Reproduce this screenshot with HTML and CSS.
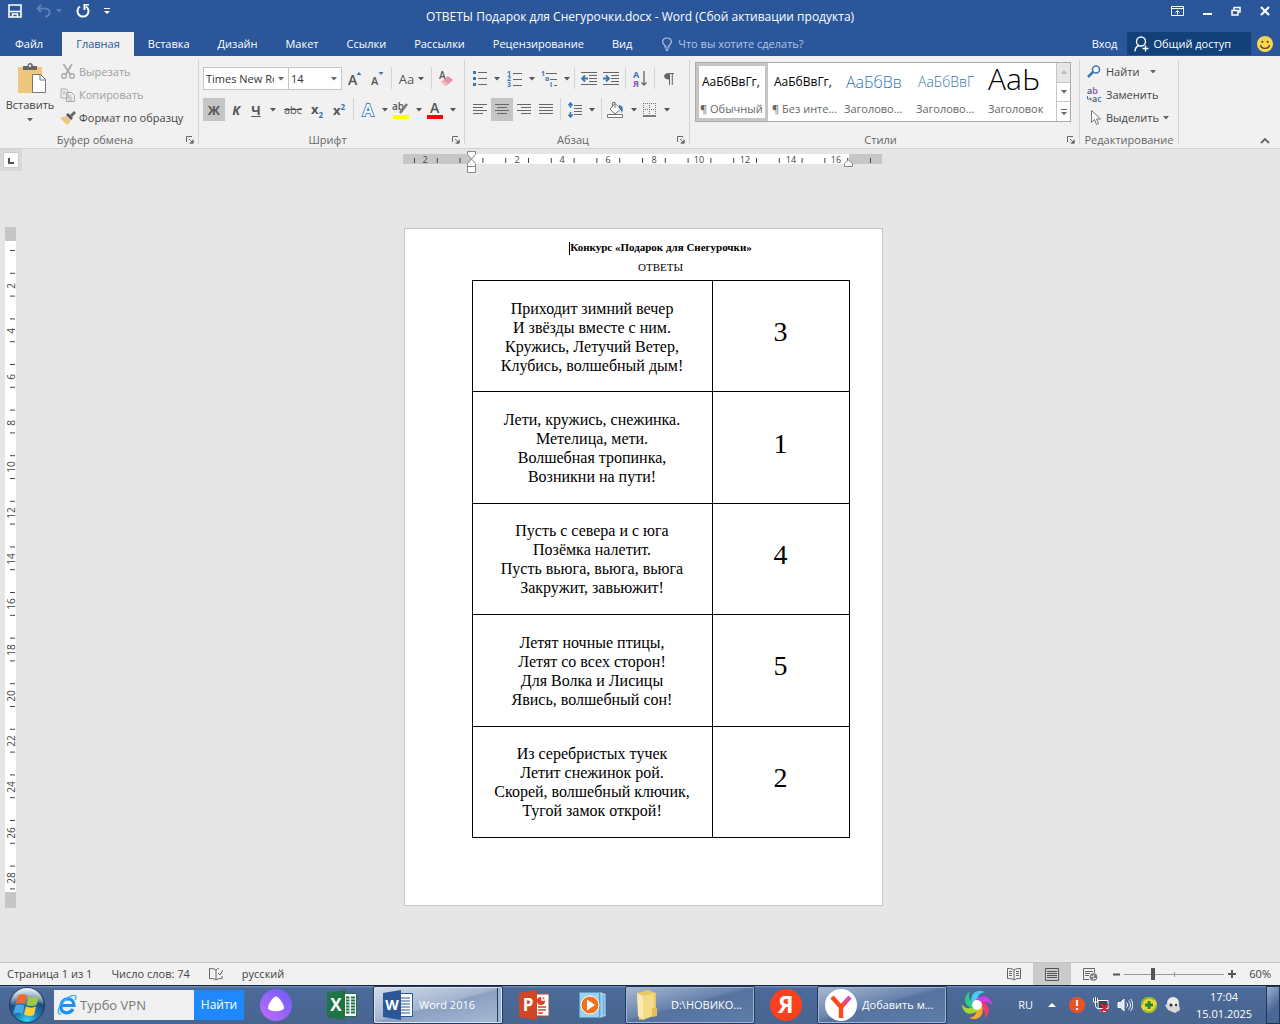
FILE: index.html
```
<!DOCTYPE html>
<html lang="ru">
<head>
  <meta charset="UTF-8">
  <title>ОТВЕТЫ Подарок для Снегурочки.docx - Word</title>
  <link rel="stylesheet" href="styles.css">
</head>
<body>
  <!-- shared icons -->
  <svg class="defs" aria-hidden="true">
    <symbol id="caret" viewBox="0 0 6 4"><path d="M0 0h6L3 3.5z" fill="currentColor"/></symbol>
    <symbol id="launcher" viewBox="0 0 8 8"><path d="M.5 6V.5H6M3 3l3 3M7 3.500V7H3.500" fill="none" stroke="#666"/><path d="M7.500 4v3.500H4z" fill="#666"/></symbol>
  </svg>

  <header class="titlebar">
    <div class="quick">
      <button aria-label="Сохранить"><svg width="14" height="14" viewBox="0 0 14 14"><path d="M1 1h12v12H1zM1 7.500h12M4.500 13v-3h5v3" fill="none" stroke="#fff" stroke-width="1.600"/></svg></button>
      <button class="dim" aria-label="Отменить"><svg width="15" height="14" viewBox="0 0 15 14"><path d="M5 1L1.500 4.500 5 8M2 4.500h7c6 0 6 8 0 8" fill="none" stroke="currentColor" stroke-width="2"/></svg><svg width="6" height="4"><use href="#caret"/></svg></button>
      <button aria-label="Повторить"><svg width="14" height="14" viewBox="0 0 14 14"><path d="M4 2.500a5.500 5.500 0 1 0 6 0" fill="none" stroke="#fff" stroke-width="2"/><path d="M7.500 0H13v1.500H9.500V6H7.500z" fill="#fff"/></svg></button>
      <button aria-label="Настройка панели"><svg width="6" height="6" viewBox="0 0 6 6"><path d="M0 0h6v1H0zM0 3h6L3 6z" fill="#fff"/></svg></button>
    </div>
    <h1 class="title">ОТВЕТЫ Подарок для Снегурочки.docx - Word (Сбой активации продукта)</h1>
    <div class="window-buttons">
      <button aria-label="Параметры ленты"><svg width="13" height="10" viewBox="0 0 13 10"><path d="M.5.5h12v9H.5zM.5 2.500h12M6.500 8.500V5M4.500 6.500l2-2 2 2" fill="none" stroke="#fff"/></svg></button>
      <button aria-label="Свернуть"><svg width="9" height="10"><path d="M0 7h9v2H0z" fill="#fff"/></svg></button>
      <button aria-label="Восстановить"><svg width="10" height="10" viewBox="0 0 10 10"><path d="M1 4.500h6V9H1zM3 4V1.500h6V6H7" fill="none" stroke="#fff" stroke-width="1.500"/></svg></button>
      <button aria-label="Закрыть"><svg width="10" height="10" viewBox="0 0 10 10"><path d="M1 1l8 8M9 1L1 9" stroke="#fff" stroke-width="2.200"/></svg></button>
    </div>
  </header>

  <nav class="tabs">
    <a class="file" href="#">Файл</a>
    <a class="active" href="#">Главная</a>
    <a href="#">Вставка</a>
    <a href="#">Дизайн</a>
    <a href="#">Макет</a>
    <a href="#">Ссылки</a>
    <a href="#">Рассылки</a>
    <a href="#">Рецензирование</a>
    <a href="#">Вид</a>
    <a class="tell" href="#"><svg width="10" height="14" viewBox="0 0 10 14"><path d="M3 10V8.500C-1 5.500.5 1 5 1s6 4.500 2 7.500V10zM3 12h4M4 13.500h2" fill="none" stroke="currentColor" stroke-width="1.200"/></svg>Что вы хотите сделать?</a>
    <div class="account">
      <a href="#">Вход</a>
      <button class="share"><svg width="15" height="16" viewBox="0 0 15 16"><circle cx="7" cy="5.500" r="4.500" fill="none" stroke="#fff" stroke-width="1.400"/><path d="M1 15.500c0-3 1.500-5 4-6M8.500 12.500h6M11.500 9.500v6" fill="none" stroke="#fff" stroke-width="1.400"/></svg>Общий доступ</button>
      <button class="smile" aria-label="Отзыв"><svg width="16" height="16" viewBox="0 0 16 16"><circle cx="8" cy="8" r="8" fill="#fcd54c"/><circle cx="5.300" cy="5.800" r="1.100" fill="#444"/><circle cx="10.700" cy="5.800" r="1.100" fill="#444"/><path d="M3.500 9c1 4.500 8 4.500 9 0" fill="none" stroke="#444" stroke-width="1.200"/></svg></button>
    </div>
  </nav>

  <section class="ribbon">
    <div class="group clipboard">
      <div class="group-body">
        <button class="paste">
          <svg width="30" height="32" viewBox="0 0 30 32"><path d="M1 4h24v26H1z" fill="#eec67d"/><path d="M6 7V3h4.500C10.500-1 16-1 16 3h4v4z" fill="#666"/><circle cx="13" cy="2.800" r="1.200" fill="#f1f1f1"/><path d="M15.500 11.500h8l5 5v13h-13z" fill="#fff" stroke="#777"/><path d="M23 11.500V17h5.500" fill="none" stroke="#777"/></svg>
          Вставить
          <svg class="caret" width="6" height="4"><use href="#caret"/></svg>
        </button>
        <div class="stack">
          <button class="off"><svg width="16" height="15" viewBox="0 0 16 15"><path d="M3.500 0l6.500 10M12 0L6 10" stroke="#aaa" stroke-width="1.800"/><circle cx="4" cy="12" r="2.300" fill="none" stroke="#aaa" stroke-width="1.400"/><circle cx="12" cy="12" r="2.300" fill="none" stroke="#aaa" stroke-width="1.400"/></svg>Вырезать</button>
          <button class="off"><svg width="16" height="14" viewBox="0 0 16 14"><path d="M1 1h5l2 2v7H1zM6.500 4.500h5l3 3v6h-8z" fill="#f1f1f1" stroke="#aaa"/><path d="M2.500 4h3M2.500 6h3M8.500 8h3M8.500 10h4M8.500 12h4" stroke="#aaa"/></svg>Копировать</button>
          <button><svg width="16" height="14" viewBox="0 0 16 14"><path d="M0 7l6-2 5 5-4 4z" fill="#eec67d"/><path d="M6 4l2-2 5 5-2 2z" fill="#555"/><path d="M10 4l4-4 2 2-4 4z" fill="#666"/></svg>Формат по образцу</button>
        </div>
      </div>
      <div class="caption"><span>Буфер обмена</span><button aria-label="Буфер обмена: параметры"><svg width="8" height="8"><use href="#launcher"/></svg></button></div>
    </div>

    <div class="group font">
      <div class="group-body rows">
        <div class="row">
          <span class="combo name"><select aria-label="Шрифт"><option>Times New Roman</option></select><svg width="6" height="4"><use href="#caret"/></svg></span>
          <span class="combo size"><select aria-label="Размер шрифта"><option>14</option></select><svg width="6" height="4"><use href="#caret"/></svg></span>
          <button class="tool" aria-label="Увеличить размер"><svg width="14" height="16" viewBox="0 0 14 16"><text class="glyph" x="0" y="14" font-size="14">A</text><path d="M8.500 4L11 1l2.500 3z" fill="#3b76b5"/></svg></button>
          <button class="tool" aria-label="Уменьшить размер"><svg width="14" height="16" viewBox="0 0 14 16"><text class="glyph" x="1" y="14" font-size="11">A</text><path d="M8.500 1h5L11 4z" fill="#3b76b5"/></svg></button>
          <i class="sep"></i>
          <button class="tool wide case">Aa<svg width="6" height="4"><use href="#caret"/></svg></button>
          <i class="sep"></i>
          <button class="tool" aria-label="Очистить формат"><svg width="16" height="16" viewBox="0 0 16 16"><text class="glyph" x="1" y="8" font-size="10">A</text><path d="M3 11l7-6 5 4-7 6z" fill="#e8919f"/><path d="M3 11l2.500-2 5 4-2.500 2z" fill="#f4b8c1"/></svg></button>
        </div>
        <div class="row">
          <button class="tool on"><b>Ж</b></button>
          <button class="tool"><b><i>К</i></b></button>
          <button class="tool wide under"><b><u>Ч</u></b><svg width="6" height="4"><use href="#caret"/></svg></button>
          <button class="tool strike"><s>abc</s></button>
          <button class="tool"><b>x<sub>2</sub></b></button>
          <button class="tool"><b>x<sup>2</sup></b></button>
          <i class="sep"></i>
          <button class="tool wide" aria-label="Текстовые эффекты"><svg width="16" height="16" viewBox="0 0 16 16"><text class="outline" x="8" y="14" font-size="16">A</text></svg><svg width="6" height="4"><use href="#caret"/></svg></button>
          <button class="tool wide mark" aria-label="Цвет выделения"><svg width="18" height="18" viewBox="0 0 18 18"><text class="glyph" x="0" y="9" font-size="10">ab</text><path d="M8 12l7-9" stroke="#777" stroke-width="2.500"/><path d="M1 14h16v4H1z" fill="#ff0"/></svg><svg width="6" height="4"><use href="#caret"/></svg></button>
          <button class="tool wide mark" aria-label="Цвет текста"><svg width="18" height="18" viewBox="0 0 18 18"><text class="glyph" x="4" y="12" font-size="14">A</text><path d="M1 14h16v4H1z" fill="red"/></svg><svg width="6" height="4"><use href="#caret"/></svg></button>
        </div>
      </div>
      <div class="caption"><span>Шрифт</span><button aria-label="Шрифт: параметры"><svg width="8" height="8"><use href="#launcher"/></svg></button></div>
    </div>

    <div class="group paragraph">
      <div class="group-body rows">
        <div class="row">
          <button class="tool list" aria-label="Маркеры"><svg width="14" height="15" viewBox="0 0 14 15"><path d="M5 1.500h9M5 7.500h9M5 13.500h9" stroke="#666"/><path d="M0 0h3v3H0zM0 6h3v3H0zM0 12h3v3H0z" fill="#3b76b5"/></svg><svg width="6" height="4"><use href="#caret"/></svg></button>
          <button class="tool list" aria-label="Нумерация"><svg width="15" height="16" viewBox="0 0 15 16"><path d="M6 2.500h9M6 8.500h9M6 14.500h9" stroke="#666"/><g class="tiny"><text x="0" y="5">1</text><text x="0" y="10">2</text><text x="0" y="16">3</text></g></svg><svg width="6" height="4"><use href="#caret"/></svg></button>
          <button class="tool list" aria-label="Многоуровневый список"><svg width="16" height="16" viewBox="0 0 16 16"><path d="M5 2.500h11M9 8.500h7M13 14.500h3" stroke="#666"/><g class="tiny"><text x="0" y="5">1</text><text x="4" y="10">a</text><text x="9" y="16">i</text></g></svg><svg width="6" height="4"><use href="#caret"/></svg></button>
          <i class="sep"></i>
          <button class="tool" aria-label="Уменьшить отступ"><svg width="16" height="14" viewBox="0 0 16 14"><path d="M0 .5h16M8 3.500h8M8 6.500h8M8 9.500h8M0 12.500h16" stroke="#666"/><path d="M7 6.500H1M4 3.500l-3 3 3 3" fill="none" stroke="#3b76b5" stroke-width="1.800"/></svg></button>
          <button class="tool" aria-label="Увеличить отступ"><svg width="16" height="14" viewBox="0 0 16 14"><path d="M0 .5h16M8 3.500h8M8 6.500h8M8 9.500h8M0 12.500h16" stroke="#666"/><path d="M0 6.500h6M3 3.500l3 3-3 3" fill="none" stroke="#3b76b5" stroke-width="1.800"/></svg></button>
          <i class="sep"></i>
          <button class="tool" aria-label="Сортировка"><svg width="14" height="16" viewBox="0 0 14 16"><g class="tiny sort"><text x="0" y="7">A</text><text class="ya-letter" x="0" y="16">Я</text></g><path d="M11 0v14M8.500 11.500L11 14l2.500-2.500" fill="none" stroke="#666" stroke-width="1.300"/></svg></button>
          <i class="sep"></i>
          <button class="tool" aria-label="Показать все знаки"><svg width="10" height="12" viewBox="0 0 10 12"><path d="M5 0h5v1H8.800v11h-1V1H6v11H5V6.500C-1.500 6.500-1.500 0 5 0z" fill="#666"/></svg></button>
        </div>
        <div class="row">
          <button class="tool" aria-label="По левому краю"><svg width="14" height="12"><path d="M0 .5h14M0 3.500h10M0 6.500h14M0 9.500h10" stroke="#666"/></svg></button>
          <button class="tool on" aria-label="По центру"><svg width="14" height="12"><path d="M0 .5h14M2 3.500h10M0 6.500h14M2 9.500h10" stroke="#666"/></svg></button>
          <button class="tool" aria-label="По правому краю"><svg width="14" height="12"><path d="M0 .5h14M4 3.500h10M0 6.500h14M4 9.500h10" stroke="#666"/></svg></button>
          <button class="tool" aria-label="По ширине"><svg width="14" height="12"><path d="M0 .5h14M0 3.500h14M0 6.500h14M0 9.500h14" stroke="#666"/></svg></button>
          <i class="sep"></i>
          <button class="tool spacing" aria-label="Интервал"><svg width="14" height="16" viewBox="0 0 14 16"><path d="M6 3.500h8M6 6.500h8M6 9.500h8M6 12.500h8" stroke="#666"/><path d="M2.500 1v5M2.500 10v5M.5 3.500l2-2.500 2 2.500M.5 12.500l2 2.500 2-2.500" fill="none" stroke="#3b76b5" stroke-width="1.600"/></svg><svg width="6" height="4"><use href="#caret"/></svg></button>
          <i class="sep"></i>
          <button class="tool spacing" aria-label="Заливка"><svg width="17" height="16" viewBox="0 0 17 16"><path d="M8 1.500L14 7l-6 5-5-5z" fill="#fff" stroke="#777"/><path d="M5.500 5V.5H8V6" fill="none" stroke="#777"/><path d="M12 3c5 1 4 5 3 8-1-2-1-4-3-5z" fill="#3b76b5"/><path d="M.5 12.500h15v3H.5z" fill="#fff" stroke="#777"/></svg><svg width="6" height="4"><use href="#caret"/></svg></button>
          <button class="tool spacing" aria-label="Границы"><svg width="14" height="14" viewBox="0 0 14 14"><path d="M0 .5h13M0 6.500h13M.5 0v12M6.500 0v12M12.500 0v12" fill="none" stroke="#777" stroke-dasharray="1 1"/><path d="M0 13h13" stroke="#555" stroke-width="1.500"/></svg><svg width="6" height="4"><use href="#caret"/></svg></button>
        </div>
      </div>
      <div class="caption"><span>Абзац</span><button aria-label="Абзац: параметры"><svg width="8" height="8"><use href="#launcher"/></svg></button></div>
    </div>

    <div class="group styles">
      <div class="group-body">
        <div class="gallery">
          <button class="style chosen"><span class="sample">АаБбВвГг,</span><span>¶ Обычный</span></button>
          <button class="style"><span class="sample">АаБбВвГг,</span><span>¶ Без инте...</span></button>
          <button class="style"><span class="sample head1">АаБбВв</span><span>Заголово...</span></button>
          <button class="style"><span class="sample head2">АаБбВвГ</span><span>Заголово...</span></button>
          <button class="style"><span class="sample head0">АаЬ</span><span>Заголовок</span></button>
          <div class="scroll">
            <button class="up" aria-label="Вверх"><svg width="6" height="4"><path d="M0 4h6L3 0z" fill="#bbb"/></svg></button>
            <button aria-label="Вниз"><svg width="6" height="4"><use href="#caret"/></svg></button>
            <button aria-label="Все стили"><svg width="6" height="6" viewBox="0 0 6 6"><path d="M0 0h6v1H0zM0 3h6L3 6z" fill="#666"/></svg></button>
          </div>
        </div>
      </div>
      <div class="caption"><span>Стили</span><button aria-label="Стили: параметры"><svg width="8" height="8"><use href="#launcher"/></svg></button></div>
    </div>

    <div class="group editing">
      <div class="group-body">
        <div class="stack">
          <button><svg width="14" height="13" viewBox="0 0 14 13"><circle cx="9" cy="4.500" r="3.500" fill="#fff" stroke="#3b76b5" stroke-width="1.600"/><path d="M6 7l-5 5" stroke="#3b76b5" stroke-width="2.500"/></svg>Найти<svg class="caret far" width="6" height="4"><use href="#caret"/></svg></button>
          <button><svg class="replace" width="16" height="16" viewBox="0 0 16 16" aria-hidden="true"><text x="0" y="7">a<tspan fill="#8a55b0">b</tspan></text><text x="5" y="15">a<tspan fill="#3b76b5">c</tspan></text><path d="M.500 9v3h4M3 10.500l1.500 1.500L3 13.500" fill="none" stroke="#3b76b5"/></svg>Заменить</button>
          <button><svg width="14" height="15" viewBox="0 0 14 15"><path d="M4.500.5v12l3-3 2 5 2-1-2-4.500h4z" fill="#fff" stroke="#777"/></svg>Выделить<svg class="caret" width="6" height="4"><use href="#caret"/></svg></button>
        </div>
      </div>
      <div class="caption"><span>Редактирование</span></div>
    </div>
    <button class="collapse" aria-label="Свернуть ленту"><svg width="10" height="6"><path d="M1 5l4-4 4 4" fill="none" stroke="#666" stroke-width="1.800"/></svg></button>
  </section>

  <main class="workspace">
    <button class="tab-stop" aria-label="Табуляция"><svg width="16" height="16"><path d="M.5.500h15v15H.5z" fill="#fff" stroke="#ccc"/><path d="M6 6v5h5" fill="none" stroke="#555" stroke-width="2"/></svg></button>
    <svg class="ruler-h" width="480" height="25" viewBox="0 0 480 25">
      <defs><pattern id="ticks-h" x="11" width="22.800" height="25" patternUnits="userSpaceOnUse"><path d="M.5 9v5" stroke="#444"/></pattern></defs>
      <path d="M0 5h479v10H0z" fill="#c6c6c6"/>
      <path d="M69 5h377v10H69z" fill="#fff"/>
      <path d="M0 5h479v10H0z" fill="url(#ticks-h)"/>
      <g class="marks">
        <text x="22" y="14">2</text><text x="114" y="14">2</text><text x="159" y="14">4</text><text x="205" y="14">6</text><text x="251" y="14">8</text><text x="296" y="14">10</text><text x="342" y="14">12</text><text x="388" y="14">14</text><text x="433" y="14">16</text>
      </g>
      <path d="M64.500 2.500h8v3l-4 4.500 4 4.500v3h-8v-3l4-4.500-4-4.500zM64.500 17.500h8v6h-8zM441.500 17.500v-3l4-3.500 4 3.500v3z" fill="#fff" stroke="#888"/>
    </svg>
    <svg class="ruler-v" width="12" height="682" viewBox="0 0 12 682">
      <defs><pattern id="ticks-v" y="23" width="12" height="22.800" patternUnits="userSpaceOnUse"><path d="M5 .5h5" stroke="#444"/></pattern></defs>
      <path d="M0 0h11v681H0z" fill="#c6c6c6"/>
      <path d="M0 14h11v651H0z" fill="#fff"/>
      <path d="M0 15h11v650H0z" fill="url(#ticks-v)"/>
      <g class="marks">
        <text transform="translate(10 59) rotate(-90)">2</text><text transform="translate(10 104) rotate(-90)">4</text><text transform="translate(10 150) rotate(-90)">6</text><text transform="translate(10 196) rotate(-90)">8</text><text transform="translate(10 240) rotate(-90)">10</text><text transform="translate(10 286) rotate(-90)">12</text><text transform="translate(10 332) rotate(-90)">14</text><text transform="translate(10 377) rotate(-90)">16</text><text transform="translate(10 423) rotate(-90)">18</text><text transform="translate(10 469) rotate(-90)">20</text><text transform="translate(10 514) rotate(-90)">22</text><text transform="translate(10 560) rotate(-90)">24</text><text transform="translate(10 606) rotate(-90)">26</text><text transform="translate(10 651) rotate(-90)">28</text>
      </g>
    </svg>
    <article class="page">
      <h2><span class="cursor"></span>Конкурс «Подарок для Снегурочки»</h2>
      <p class="subtitle">ОТВЕТЫ</p>
      <table class="answers">
        <tr><td>Приходит зимний вечер<br>И звёзды вместе с ним.<br>Кружись, Летучий Ветер,<br>Клубись, волшебный дым!</td><td class="number">3</td></tr>
        <tr><td>Лети, кружись, снежинка.<br>Метелица, мети.<br>Волшебная тропинка,<br>Возникни на пути!</td><td class="number">1</td></tr>
        <tr><td>Пусть с севера и с юга<br>Позёмка налетит.<br>Пусть вьюга, вьюга, вьюга<br>Закружит, завьюжит!</td><td class="number">4</td></tr>
        <tr><td>Летят ночные птицы,<br>Летят со всех сторон!<br>Для Волка и Лисицы<br>Явись, волшебный сон!</td><td class="number">5</td></tr>
        <tr><td>Из серебристых тучек<br>Летит снежинок рой.<br>Скорей, волшебный ключик,<br>Тугой замок открой!</td><td class="number">2</td></tr>
      </table>
    </article>
  </main>

  <footer class="status">
    <span>Страница 1 из 1</span>
    <span>Число слов: 74</span>
    <svg width="14" height="13" viewBox="0 0 14 13"><path d="M7 2v9.500M7 2C5 .5 3 .5.500.5v10C3 10.500 5 10.500 7 12M7 2c1-1 2-1.500 3-1.500M7 12c1-1 3-1.500 6-1.500V8M9 5l2 2 3-5" fill="none" stroke="#666"/></svg>
    <span>русский</span>
    <div class="views">
      <button aria-label="Режим чтения"><svg width="14" height="13" viewBox="0 0 14 13"><path d="M7 2v10M7 2C5 .5 3 .5.500.5v10C3 10.500 5 10.500 7 12 9 10.500 11 10.500 13.500 10.500V.5C11 .5 9 .5 7 2zM2 3.500h3M2 5.500h3M2 7.500h3M9 3.500h3M9 5.500h3M9 7.500h3" fill="none" stroke="#666"/></svg></button>
      <button class="on" aria-label="Разметка страницы"><svg width="14" height="13"><path d="M.5.500h13v12H.500zM2 3.500h10M2 5.500h10M2 7.500h10M2 9.500h10" fill="none" stroke="#555"/></svg></button>
      <button aria-label="Веб-документ"><svg width="15" height="13" viewBox="0 0 15 13"><path d="M6 11.500H.5V.5h11V5M2 3.500h8M2 5.500h5M2 7.500h4" fill="none" stroke="#666"/><circle cx="10.500" cy="9" r="3.800" fill="#777"/><path d="M8 8l2 1 1-2M10 12l1-2 2 .5" stroke="#f1f1f1" fill="none"/></svg></button>
    </div>
    <div class="zoom-bar">
      <button aria-label="Уменьшить"><svg width="7" height="7"><path d="M0 3.500h7" stroke="#555" stroke-width="2"/></svg></button>
      <input class="zoom" type="range" min="0" max="100" value="28" aria-label="Масштаб">
      <button aria-label="Увеличить"><svg width="8" height="8"><path d="M0 4h8M4 0v8" stroke="#555" stroke-width="2"/></svg></button>
    </div>
    <span class="percent">60%</span>
  </footer>

  <div class="taskbar">
    <button class="start" aria-label="Пуск"><svg width="38" height="38" viewBox="0 0 38 38">
      <defs>
        <radialGradient id="orb" cx=".5" cy=".95" r=".9"><stop offset="0" stop-color="#34d6f5"/><stop offset=".35" stop-color="#1c7eb4"/><stop offset=".7" stop-color="#1e4a78"/><stop offset="1" stop-color="#9db6cf"/></radialGradient>
        <linearGradient id="gloss" x2="0" y2="1"><stop offset="0" stop-color="#fff" stop-opacity=".75"/><stop offset="1" stop-color="#fff" stop-opacity=".12"/></linearGradient>
      </defs>
      <circle cx="19" cy="19" r="17.500" fill="url(#orb)" stroke="#1b3860"/><path d="M3 18a16 16 0 0 1 32 0c-9-4-22 4-32 0z" fill="url(#gloss)"/>
      <path d="M10 9.500c3-2 6-1.500 9 0L17 18c-3-1.500-5.500-1.500-9 0z" fill="#ee6a2f"/><path d="M20.500 10.500c3 1.500 6.500 1.500 10.500-.5L28.500 19c-3.500 1.500-7 1-10 0z" fill="#9bcb48"/><path d="M7.500 19.500c3-1.500 6-1.500 9 0L14.500 28c-3-2-5.500-1.500-9 0z" fill="#4aa9e9"/><path d="M18 20.500c3.500 1.500 7 1.500 10 0L26 29c-3.500 1.500-7 1-10-.5z" fill="#fccf3a"/></svg></button>
    <form class="search">
      <svg width="20" height="20" viewBox="0 0 20 20"><path d="M4 10.500h13C17 2 5 1.500 4 10.500s9 9 12 3.500" fill="none" stroke="#1e90f0" stroke-width="3.200"/><path d="M4 19C-1 20 1 10 9 4s12-4 9 1" fill="none" stroke="#35aef5" stroke-width="1.300"/></svg>
      <input type="text" placeholder="Турбо VPN" aria-label="Поиск">
      <button type="button">Найти</button>
    </form>
    <button class="app alice" aria-label="Алиса"><svg width="32" height="32" viewBox="0 0 32 32"><defs><linearGradient id="alice" x1="1" y1="0" x2="0" y2="1"><stop offset="0" stop-color="#6a5cff"/><stop offset="1" stop-color="#c26bf5"/></linearGradient></defs><circle cx="16" cy="16" r="16" fill="url(#alice)"/><path d="M16 7.500c3 0 8 8 8 11 0 5-16 5-16 0 0-3 5-11 8-11z" fill="#fff"/></svg></button>
    <button class="app excel" aria-label="Excel"><svg width="30" height="30" viewBox="0 0 30 30"><path d="M16 3.500h13.500v23H16z" fill="#fff" stroke="#1f7345"/><path d="M23 6v18" stroke="#fff"/><path d="M19 7.500h3.500M24 7.500h4M19 10.500h3.500M24 10.500h4M19 13.500h3.500M24 13.500h4M19 16.500h3.500M24 16.500h4M19 19.500h3.500M24 19.500h4M19 22.500h3.500M24 22.500h4" stroke="#1f7345" stroke-width="2"/><path d="M0 3l18-3v30L0 27z" fill="#1f7345"/><text class="logo" x="9" y="21" font-size="17">X</text></svg></button>
    <button class="task active stacked"><svg width="30" height="30" viewBox="0 0 30 30"><path d="M16 3.500h13.500v23H16z" fill="#fff" stroke="#2b579a"/><path d="M18 8h9M18 11h9M18 14h9M18 17h9M18 20h9M18 23h9" stroke="#2b579a" stroke-width="1.200"/><path d="M0 3l18-3v30L0 27z" fill="#2b579a"/><text class="logo" x="9" y="20" font-size="14">W</text></svg><span>Word 2016</span></button>
    <button class="app ppt" aria-label="PowerPoint"><svg width="30" height="30" viewBox="0 0 30 30"><path d="M16 4h14v22H16z" fill="#fff" stroke="#d24625"/><path d="M19 17h8M19 20h8M19 23h5" stroke="#d24625" stroke-width="1.500"/><circle cx="22" cy="11" r="4" fill="#d24625"/><path d="M23 6v4h4" fill="none" stroke="#fff" stroke-width="1.500"/><path d="M0 3l18-3v30L0 27z" fill="#d24625"/><text class="logo" x="9" y="21" font-size="17">P</text></svg></button>
    <button class="app wmp" aria-label="Проигрыватель"><svg width="27" height="26" viewBox="0 0 27 26"><path d="M6 2h20v22H6z" fill="#6db1d8" stroke="#bfe2f5"/><path d="M3 1h20v24H3z" fill="#7cc0e4" stroke="#bfe2f5"/><path d="M.5.500h20v25H.500z" fill="#9fd1ec" stroke="#5aa0cb"/><circle cx="11" cy="13" r="9" fill="#f0731c" stroke="#fff"/><path d="M8 7.500v11l8-5.500z" fill="#fff"/></svg></button>
    <button class="task folder"><svg width="24" height="32" viewBox="0 0 24 32"><path d="M2 4l11-3 8 3v22l-8 3-9 2z" fill="#e8c964"/><path d="M2 4l6 3v24l-5-4z" fill="#f9ecb0"/><path d="M8 7l11-3v22L8 31z" fill="#f3dc87"/><path d="M17 19h5v8l-5 1z" fill="#e5bd50"/></svg><span>D:\НОВИКО...</span></button>
    <button class="app ya" aria-label="Яндекс"><svg width="32" height="32" viewBox="0 0 32 32"><circle cx="16" cy="16" r="16" fill="#fc3f1d"/><text class="logo" x="16" y="24" font-size="23">Я</text></svg></button>
    <button class="task browser"><svg width="32" height="32" viewBox="0 0 32 32"><defs><linearGradient id="branch" x1="1" y1="0" x2="0" y2="1"><stop offset="0" stop-color="#d848d8"/><stop offset="1" stop-color="#fb4a1e"/></linearGradient></defs><circle cx="16" cy="16" r="16" fill="#fff"/><path d="M25 8l-9 10" stroke="url(#branch)" stroke-width="4.500"/><path d="M7 8l9 10v11" fill="none" stroke="#fb4a1e" stroke-width="4.500"/></svg><span>Добавить м...</span></button>
    <button class="app flower" aria-label="Браузер"><svg width="32" height="32" viewBox="0 0 32 32">
      <defs><path id="petal" d="M11 15C8 6 15-1 24 3c-5 1-8 4-7 8z"/></defs>
      <use href="#petal" fill="#4cc9f0"/><use href="#petal" fill="#d63be8" transform="rotate(60 16 16)"/><use href="#petal" fill="#f23a6b" transform="rotate(120 16 16)"/><use href="#petal" fill="#f9a825" transform="rotate(180 16 16)"/><use href="#petal" fill="#a6d930" transform="rotate(240 16 16)"/><use href="#petal" fill="#2fc98a" transform="rotate(300 16 16)"/>
      <circle cx="16" cy="16" r="5" fill="#fff"/></svg></button>
    <div class="tray">
      <span class="lang">RU</span>
      <svg class="more" width="8" height="4"><path d="M0 4h8L4 0z" fill="#fff"/></svg>
      <svg width="16" height="16" viewBox="0 0 16 16"><circle cx="8" cy="8" r="8" fill="#ef5023"/><path d="M8 3v6M8 11v2" stroke="#fff" stroke-width="2.200"/></svg>
      <svg width="16" height="16" viewBox="0 0 16 16"><path d="M5 3.500h10v8H5zM7 14.500h6M2.500 0v8c0 3 2 4 4 4M.5 1v4h4V1" fill="#34455f" stroke="#fff"/><path d="M8 7l7 8M15 7l-7 8" stroke="#e5202a" stroke-width="2.200"/></svg>
      <svg width="16" height="14" viewBox="0 0 16 14"><path d="M1 4.500h2.500L7 1v12L3.500 9.500H1z" fill="#dfe7f1" stroke="#fff"/><path d="M9.500 4.500c1.500 1.500 1.500 3.500 0 5M11.500 2.500c2.500 2.500 2.500 6.500 0 9M13.500 1c3 3.500 3 8.500 0 12" fill="none" stroke="#fff"/></svg>
      <svg width="16" height="16" viewBox="0 0 16 16"><circle cx="8" cy="8" r="8" fill="#f5d52e"/><path d="M1 8a7 7 0 0 1 12-5M15 8a7 7 0 0 1-12 5" fill="none" stroke="#7fbf3a" stroke-width="2"/><path d="M8 4v8M4 8h8" stroke="#26863a" stroke-width="3"/></svg>
      <svg width="16" height="16" viewBox="0 0 16 16"><circle cx="8" cy="6" r="6" fill="#ececec"/><path d="M0 8l5-2 5 4 4-3 1 6-5 3-7-3z" fill="#d8d8d8"/><circle cx="6" cy="8" r="1.500" fill="#333"/><circle cx="11" cy="8" r="1.200" fill="#333"/></svg>
      <time class="clock">17:04<br>15.01.2025</time>
      <button class="desktop" aria-label="Показать рабочий стол"></button>
    </div>
  </div>
</body>
</html>
```
FILE: styles.css
```
* {
  box-sizing: border-box;
}
body {
  margin: 0;
  min-height: 100vh;
  display: flex;
  flex-direction: column;
  background-color: #e6e6e6;
  color: #444;
  font-family: "Open Sans", "Noto Sans", sans-serif;
  font-size: 11px;
  line-height: 16px;
}
button {
  margin: 0;
  padding: 0;
  border: 0;
  background: none;
  color: inherit;
  font: inherit;
  display: flex;
  align-items: center;
  justify-content: center;
  white-space: nowrap;
}
a {
  color: inherit;
  text-decoration: none;
}
svg {
  flex: none;
}
.defs {
  position: absolute;
  width: 0;
  height: 0;
}

/* title bar */
.titlebar {
  display: grid;
  grid-template-columns: 1fr auto 1fr;
  height: 32px;
  background-color: #2b579a;
  color: #fff;
}
.quick {
  display: flex;
  align-items: center;
  gap: 14px;
  height: 22px;
  padding-left: 8px;
}
.quick .dim {
  gap: 5px;
  color: #5d80b6;
}
.title {
  margin: 0;
  padding-top: 9px;
  font-size: 12px;
  font-weight: normal;
  line-height: 16px;
}
.window-buttons {
  display: flex;
  align-items: center;
  justify-content: flex-end;
  gap: 19px;
  height: 22px;
  padding-right: 10px;
}

/* tabs */
.tabs {
  display: flex;
  height: 24px;
  background-color: #2b579a;
  color: #fff;
  line-height: 24px;
}
.tabs > a {
  padding: 0 14px;
}
.tabs .file {
  padding: 0 19px 0 15px;
}
.tabs .active {
  padding: 0 14px;
  background-color: #f1f1f1;
  color: #2b579a;
}
.tabs .tell {
  display: flex;
  align-items: center;
  gap: 6px;
  margin-left: 2px;
  color: #b4c5e0;
}
.account {
  display: flex;
  gap: 10px;
  margin-left: auto;
  padding-right: 7px;
}
.share {
  gap: 4px;
  height: 23px;
  padding: 0 20px 0 7px;
  background-color: #124078;
}
.smile {
  margin-left: -4px;
}

/* ribbon */
.ribbon {
  display: flex;
  padding-top: 4px;
  height: 93px;
  border-bottom: 1px solid #d2d2d2;
  background-color: #f1f1f1;
}
.group {
  display: flex;
  flex-direction: column;
  height: 84px;
  border-right: 1px solid #d4d4d4;
}
.group-body {
  flex: 1;
  display: flex;
}
.caption {
  display: flex;
  align-items: center;
  height: 12px;
  margin-bottom: -2px;
  padding: 0 4px;
  color: #666;
}
.caption span {
  flex: 1;
  text-align: center;
}
.clipboard {
  width: 199px;
}
.font {
  width: 266px;
}
.paragraph {
  width: 225px;
}
.styles {
  width: 390px;
}
.editing {
  width: 99px;
}
.paste {
  flex-direction: column;
  justify-content: flex-start;
  width: 50px;
  margin-left: 5px;
  padding-top: 3px;
}
.paste svg {
  margin: 0 0 2px 4px;
}
.paste .caret {
  margin: 5px 0 0;
}
.stack {
  display: flex;
  flex-direction: column;
  padding-left: 5px;
}
.stack button {
  justify-content: flex-start;
  gap: 3px;
  height: 23px;
}
.stack .off {
  color: #a0a0a0;
}
.caret {
  color: #666;
}
.rows {
  flex-direction: column;
  gap: 8px;
  padding: 7px 4px 0;
}
.row {
  display: flex;
  height: 23px;
}
.combo {
  display: flex;
  align-items: center;
  gap: 4px;
  border: 1px solid #c6c6c6;
  background-color: #fff;
  padding-right: 4px;
  color: #666;
}
.combo select {
  appearance: none;
  flex: 1;
  min-width: 0;
  padding: 0 0 0 2px;
  border: 0;
  background: none;
  color: #333;
  font: inherit;
  overflow: hidden;
  text-overflow: clip;
}
.combo.name {
  width: 86px;
}
.combo.size {
  width: 54px;
  margin: 0 2px 0 -1px;
}
.tool {
  width: 22px;
  color: #555;
  font-size: 13px;
}
.tool.on {
  background-color: #c5c5c5;
}
.tool.wide {
  width: 33px;
  gap: 6px;
}
.tool.under {
  gap: 9px;
}
.tool.list {
  width: 34px;
  gap: 7px;
  justify-content: flex-start;
  padding-left: 4px;
}
.tool.spacing {
  width: 34px;
  gap: 7px;
}
.tool.case {
  gap: 4px;
}
.tool.mark {
  width: 34px;
}
.tool.strike {
  width: 26px;
  font-size: 11px;
}
.tool sub,
.tool sup {
  color: #3b76b5;
  font-size: 8px;
  line-height: 8px;
}
.glyph {
  fill: #555;
  font-weight: 600;
}
.outline {
  fill: #fff;
  stroke: #4a86c5;
  stroke-width: 2px;
  paint-order: stroke;
  font-weight: 600;
  text-anchor: middle;
}
.tiny {
  fill: #3b76b5;
  font-size: 7px;
  font-weight: bold;
}
.sort {
  font-size: 9px;
}
.ya-letter {
  fill: #8a55b0;
}
.sep {
  width: 1px;
  height: 22px;
  margin: 0 3px;
  background-color: #d4d4d4;
}

/* styles gallery */
.gallery {
  display: flex;
  height: 60px;
  margin: 2px 0 0 5px;
  border: 1px solid #ababab;
  background-color: #fff;
}
.style {
  flex-direction: column;
  align-items: flex-start;
  justify-content: flex-end;
  width: 72px;
  padding: 0 2px 4px 4px;
  color: #666;
}
.style.chosen {
  border: 3px solid #c5c5c5;
  padding: 0 0 1px 1px;
}
.sample {
  width: 62px;
  height: 30px;
  padding-left: 2px;
  color: #000;
  font-size: 12px;
  line-height: 22px;
  text-align: left;
}
.head1 {
  color: #2e74b5;
  font-size: 16px;
  font-weight: 300;
}
.head2 {
  color: #2e74b5;
  font-size: 14px;
  font-weight: 300;
}
.head0 {
  height: 38px;
  padding-left: 0;
  font-size: 30px;
  font-weight: 300;
  line-height: 32px;
}
.scroll {
  display: flex;
  flex-direction: column;
  width: 14px;
  border-left: 1px solid #c6c6c6;
}
.scroll button {
  flex: 1;
  color: #666;
}
.scroll button + button {
  border-top: 1px solid #c6c6c6;
}
.scroll .up {
  background-color: #e6e6e6;
}
.editing .stack {
  padding-left: 7px;
}
.editing .stack button {
  gap: 5px;
}
.editing .stack .caret {
  margin-left: -1px;
}
.editing .stack .far {
  margin-left: 6px;
}
.editing .stack .replace {
  margin-right: -2px;
  fill: #555;
  font-size: 9px;
  font-weight: 600;
}
.collapse {
  align-self: flex-end;
  margin: 0 10px 4px auto;
}

/* document area */
.workspace {
  flex: 1;
  display: grid;
  grid-template-columns: 24px 1fr;
  grid-template-rows: 78px 1fr;
  align-items: start;
  padding-right: 18px;
}
.tab-stop {
  width: 22px;
  height: 22px;
  background-color: #d9d9d9;
}
.ruler-h {
  justify-self: center;
}
.ruler-v {
  margin-left: 5px;
}
.marks {
  fill: #444;
  font-size: 9px;
  text-anchor: middle;
}
.ruler-v .marks {
  font-size: 10px;
}
.page {
  justify-self: center;
  width: 479px;
  min-height: 678px;
  margin-top: 1px;
  padding: 8px 32px 67px 67px;
  border: 1px solid #c6c6c6;
  background-color: #fff;
  color: #000;
  font-family: "Liberation Serif", "Times New Roman", serif;
  text-align: center;
}
.page h2 {
  margin: 0;
  font-size: 11px;
  line-height: 20px;
}
.cursor {
  display: inline-block;
  width: 1px;
  height: 13px;
  background-color: #000;
  vertical-align: middle;
}
.subtitle {
  margin: 0 0 3px;
  font-size: 11px;
  line-height: 20px;
}
.answers {
  width: 100%;
  height: 558px;
  border-collapse: collapse;
  font-size: 16px;
  line-height: 19px;
}
.answers td {
  padding: 1px 0 0;
  border: 1px solid #000;
}
.answers .number {
  width: 137px;
  padding-bottom: 10px;
  font-size: 28px;
}

/* status bar */
.status {
  display: flex;
  align-items: center;
  gap: 19px;
  height: 23px;
  padding: 0 9px 0 7px;
  border-top: 1px solid #c6c6c6;
  background-color: #f1f1f1;
}
.views {
  display: flex;
  align-self: stretch;
  margin-left: auto;
}
.views button {
  width: 38px;
}
.views .on {
  background-color: #cacaca;
}
.zoom-bar {
  display: flex;
  align-items: center;
  gap: 4px;
  margin: 0 -6px 0 -15px;
}
.zoom {
  appearance: none;
  width: 100px;
  height: 12px;
  margin: 0;
  background: linear-gradient(#999, #999) center / 100% 1px no-repeat, linear-gradient(#999, #999) center / 1px 5px no-repeat;
}
.zoom::-webkit-slider-thumb {
  appearance: none;
  width: 4px;
  height: 12px;
  background-color: #555;
}

/* taskbar */
.taskbar {
  display: flex;
  align-items: center;
  height: 39px;
  padding-left: 8px;
  border-top: 1px solid #17273f;
  background: linear-gradient(#7c96bd 0, #4c6a9a 2px, #48658f 100%);
  color: #fff;
}
.search {
  display: flex;
  align-items: center;
  width: 190px;
  height: 30px;
  margin: 0 16px 0 8px;
  padding-left: 3px;
  background-color: #f0f0f0;
}
.search input {
  flex: 1;
  min-width: 0;
  padding: 0 0 0 3px;
  border: 0;
  background: none;
  font: inherit;
  font-size: 13px;
}
.search input::placeholder {
  color: #777;
}
.search button {
  width: 50px;
  height: 30px;
  background-color: #1e88fc;
  font-size: 12px;
}
.logo {
  fill: #fff;
  font-weight: bold;
  text-anchor: middle;
}
.excel {
  margin: 0 16px 0 35px;
}
.task {
  justify-content: flex-start;
  width: 130px;
  height: 38px;
  padding-left: 9px;
  gap: 6px;
  border: 1px solid #233a5e;
  border-radius: 2px;
  box-shadow: inset 0 0 0 1px #9fb3d0;
  background: linear-gradient(165deg, #a8b9d2 0, #6a84ad 45%, #56739f 50%, #5f7daa 100%);
}
.task.active {
  background: linear-gradient(165deg, #d3dce9 0, #a5b5cf 48%, #8b9fc0 52%, #a9bbd6 100%);
}
.task.stacked {
  box-shadow: inset 0 0 0 1px #dbe4f0, inset -4px 0 #9fb3d0, inset -5px 0 #233a5e;
}
.ppt {
  margin: 0 30px 0 16px;
}
.folder {
  margin-left: 19px;
  gap: 12px;
}
.ya {
  margin: 0 15px;
}
.browser {
  gap: 5px;
  padding-left: 7px;
}
.flower {
  margin-left: 14px;
}
.tray {
  display: flex;
  align-items: center;
  align-self: stretch;
  gap: 8px;
  margin-left: auto;
}
.lang {
  margin-right: 7px;
}
.more {
  margin-right: 5px;
}
.clock {
  width: 68px;
  margin-left: 1px;
  line-height: 17px;
  text-align: center;
}
.desktop {
  align-self: stretch;
  width: 14px;
  border: 1px solid #1f3557;
  background: linear-gradient(135deg, #9bb0cf, #4a6798 60%);
}
```
